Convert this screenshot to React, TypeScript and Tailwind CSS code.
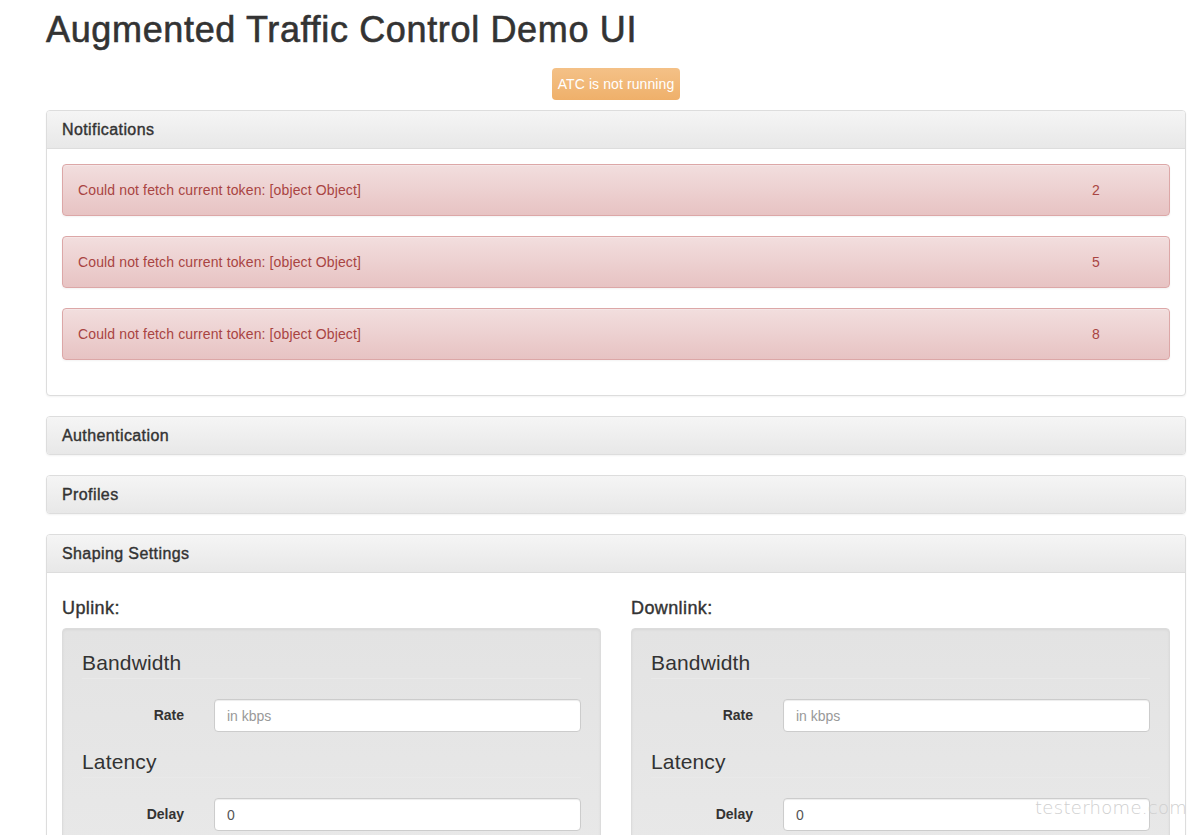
const alerts = [
  { id: 1, message: 'Could not fetch current token: [object Object]', count: 2 },
  { id: 2, message: 'Could not fetch current token: [object Object]', count: 5 },
  { id: 3, message: 'Could not fetch current token: [object Object]', count: 8 },
]

function Panel({ title, children }: { title: string; children?: React.ReactNode }) {
  return (
    <div className="mb-[20px] rounded-[4px] border border-[#ddd] bg-white shadow-[0_1px_2px_rgba(0,0,0,0.05)]">
      <div
        className={
          children
            ? 'rounded-t-[3px] border-b border-[#ddd] bg-gradient-to-b from-[#f5f5f5] to-[#e8e8e8] px-[15px] py-[10px]'
            : 'rounded-[3px] bg-gradient-to-b from-[#f5f5f5] to-[#e8e8e8] px-[15px] py-[10px]'
        }
      >
        <h3 className="text-[16px] leading-[17px] tracking-[0.4px] text-[#333] [-webkit-text-stroke:0.4px_#333]">
          {title}
        </h3>
      </div>
      {children}
    </div>
  )
}

function Field({ label, placeholder, value }: { label: string; placeholder?: string; value?: string }) {
  return (
    <div className="mb-[15px] flex gap-[30px]">
      <label className="w-[102px] shrink-0 pt-[6px] text-right text-[14px] leading-[20px] font-bold text-[#333]">
        {label}
      </label>
      <input
        className="h-[33px] flex-1 rounded-[4px] border border-[#ccc] bg-white px-[12px] text-[14px] text-[#555] shadow-[inset_0_1px_1px_rgba(0,0,0,0.075)] outline-none placeholder:text-[#999]"
        placeholder={placeholder}
        defaultValue={value}
      />
    </div>
  )
}

function Legend({ children }: { children: React.ReactNode }) {
  return (
    <div className="mb-[20px] border-b border-[#e9e9e9] text-[21px] leading-[30px] tracking-[0.15px] text-[#333]">
      {children}
    </div>
  )
}

function LinkSettings({ title }: { title: string }) {
  return (
    <div>
      <h4 className="mt-[10px] mb-[10px] text-[18px] leading-[20px] tracking-[0.4px] text-[#333] [-webkit-text-stroke:0.4px_#333]">
        {title}
      </h4>
      <div className="rounded-[4px] border border-[#dcdcdc] bg-gradient-to-b from-[#e3e3e3] to-[#ececec] p-[19px] shadow-[inset_0_1px_3px_rgba(0,0,0,0.05)]">
        <Legend>Bandwidth</Legend>
        <Field label="Rate" placeholder="in kbps" />
        <Legend>Latency</Legend>
        <Field label="Delay" value="0" />
        <Field label="Jitter" value="0" />
        <Legend>Packet Loss</Legend>
        <Field label="Percentage" value="0" />
      </div>
    </div>
  )
}

export default function App() {
  return (
    <div className="relative min-h-screen bg-white font-['Liberation_Sans',Arial,sans-serif] text-[14px] leading-[20px] text-[#333]">
      <div className="ml-[46px] w-[1140px]">
        <h1 className="pt-[10px] text-[36px] leading-[40px] tracking-[0.65px] text-[#333] [-webkit-text-stroke:0.6px_#333]">
          Augmented Traffic Control Demo UI
        </h1>

        <div className="mt-[18px] flex justify-center">
          <span className="rounded-[4px] bg-gradient-to-b from-[#f4c187] to-[#efb06a] px-[6px] py-[6px] text-[14px] leading-[20px] tracking-[0.1px] text-white">
            ATC is not running
          </span>
        </div>

        <div className="mt-[10px]">
          <Panel title="Notifications">
            <div className="p-[15px]">
              {alerts.map((alert) => (
                <div
                  key={alert.id}
                  className="mb-[20px] flex rounded-[4px] border border-[#dca7a7] bg-gradient-to-b from-[#f2dede] to-[#e7c3c3] p-[15px] text-[#a94442] shadow-[inset_0_1px_0_rgba(255,255,255,0.25),0_1px_2px_rgba(0,0,0,0.05)]"
                >
                  <div className="flex-1 tracking-[0.13px]">{alert.message}</div>
                  <div className="w-[62px]">{alert.count}</div>
                </div>
              ))}
            </div>
          </Panel>

          <Panel title="Authentication" />
          <Panel title="Profiles" />

          <Panel title="Shaping Settings">
            <div className="grid grid-cols-2 gap-[30px] p-[15px]">
              <LinkSettings title="Uplink:" />
              <LinkSettings title="Downlink:" />
            </div>
          </Panel>
        </div>
      </div>

      <span className="absolute top-[796px] left-[1035px] font-['DejaVu_Sans',sans-serif] text-[18px] leading-[24px] font-extralight tracking-[0.3px] text-[#cfcfcf]">
        testerhome.com
      </span>
    </div>
  )
}
